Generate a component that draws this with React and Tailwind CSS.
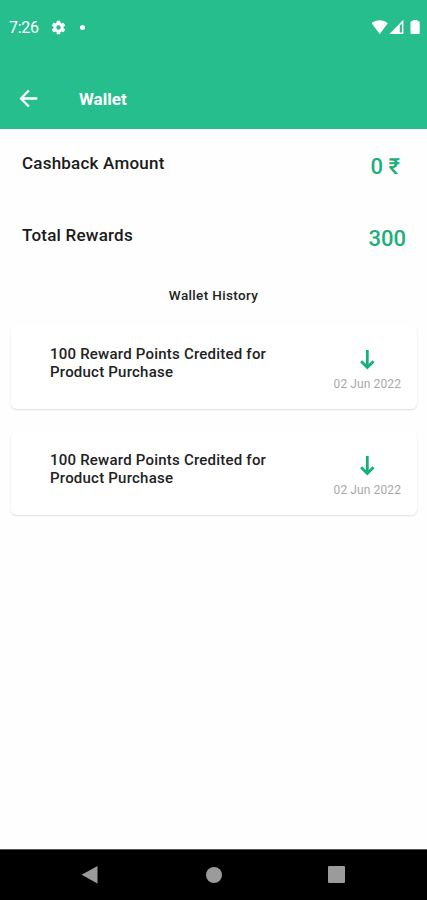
import React from "react";

const history = [
  { id: 1, title: "100 Reward Points Credited for Product Purchase", date: "02 Jun 2022" },
  { id: 2, title: "100 Reward Points Credited for Product Purchase", date: "02 Jun 2022" },
];

function StatusBar() {
  return (
    <div className="flex h-[56px] items-center px-[9px] text-white">
      <span className="w-[41px] text-[16px] leading-[20px] tracking-[-0.3px]">7:26</span>
      <svg className="-mt-[2px] h-[17px] w-[17px]" viewBox="0 0 24 24" fill="currentColor">
        <path d="M19.14 12.94c.04-.3.06-.61.06-.94 0-.32-.02-.64-.07-.94l2.03-1.58a.49.49 0 0 0 .12-.61l-1.92-3.32a.488.488 0 0 0-.59-.22l-2.39.96c-.5-.38-1.03-.7-1.62-.94l-.36-2.54a.484.484 0 0 0-.48-.41h-3.84c-.24 0-.43.17-.47.41l-.36 2.54c-.59.24-1.13.57-1.62.94l-2.39-.96c-.22-.08-.47 0-.59.22L2.74 8.87c-.12.21-.08.47.12.61l2.03 1.58c-.05.3-.09.63-.09.94s.02.64.07.94l-2.03 1.58a.49.49 0 0 0-.12.61l1.92 3.32c.12.22.37.29.59.22l2.39-.96c.5.38 1.03.7 1.62.94l.36 2.54c.05.24.24.41.48.41h3.84c.24 0 .44-.17.47-.41l.36-2.54c.59-.24 1.13-.56 1.62-.94l2.39.96c.22.08.47 0 .59-.22l1.92-3.32c.12-.22.07-.47-.12-.61l-2.01-1.58zM12 15.1A3.1 3.1 0 1 1 12 8.9a3.1 3.1 0 0 1 0 6.2z" />
      </svg>
      <span className="-mt-[1px] ml-[13px] h-[5px] w-[5px] rounded-full bg-white" />
      {/* wifi, signal, battery */}
      <svg className="-mt-[2px] -mr-[4px] ml-auto h-[16px] w-[50px]" viewBox="0 0 50 16" fill="currentColor">
        <path d="M-0.4 4.2C4.1 0.2 11.3 0.2 15.8 4.2L7.7 15Z" />
        <path fillRule="evenodd" d="M31.4 0.8V15H17.4ZM27.8 6.4V13.4H29.9V4.4Z" />
        <path d="M40.7 0.9h4.8v1.3h1.2q1 0 1 1v10.8q0 1-1 1h-7.2q-1 0-1-1v-10.8q0-1 1-1h1.2Z" />
      </svg>
    </div>
  );
}

function AppBar() {
  return (
    <div className="flex h-[73px] items-center pt-[13px] pl-[19px] text-white">
      <svg className="-mt-[2px] h-[19px] w-[19px]" viewBox="0 0 19 19" fill="none" stroke="currentColor" strokeWidth="2.3">
        <path d="M18.3 9.5H2.4M9.8 1.5L2 9.5L9.8 17.5" />
      </svg>
      <h1 className="ml-[41px] text-[17px] leading-[22px] font-bold">Wallet</h1>
    </div>
  );
}

function SummaryRow({ label, value, className }) {
  return (
    <div className={`flex h-[72px] items-start justify-between pl-[22px] ${className}`}>
      <span className="mt-[23px] text-[17px] leading-[22px] font-medium tracking-[0.22px] text-[#1b1b1b]">{label}</span>
      <span className="mt-[24px] text-[22px] leading-[28px] font-medium text-[#1fae7a]">{value}</span>
    </div>
  );
}

function HistoryCard({ title, date }) {
  return (
    <div className="flex h-[84px] justify-between rounded-[6px] bg-white pr-[16px] pl-[39px] shadow-[0_1px_2px_rgba(0,0,0,0.13)]">
      <p className="mt-[20px] w-[235px] text-[15px] leading-[18px] font-medium tracking-[0.22px] text-[#222222]">{title}</p>
      <div className="flex flex-col items-center pt-[25px]">
        <svg className="h-[20px] w-[16px]" viewBox="0 0 16 20" fill="none" stroke="#13b177" strokeWidth="2.8">
          <path d="M8.3 0V17.5M2.1 11.2L8.3 17.4L14.5 11.2" />
        </svg>
        <span className="mt-[6px] text-[12px] leading-[16px] tracking-[0.1px] whitespace-nowrap text-[#a9a9a9]">{date}</span>
      </div>
    </div>
  );
}

function NavBar() {
  return (
    <div className="flex h-[51px] items-center border-t border-[#555555] bg-black pl-[81px] text-[#9b9b9b]">
      <svg className="h-[20px] w-[17px]" viewBox="0 0 17 20" fill="currentColor">
        <path d="M16.5 1V18.6L0.6 9.8Z" />
      </svg>
      <span className="ml-[108px] h-[16px] w-[16px] rounded-full bg-[#9b9b9b]" />
      <span className="-mt-[1px] ml-[106px] h-[17px] w-[17px] rounded-[1px] bg-[#9b9b9b]" />
    </div>
  );
}

export default function App() {
  return (
    <div className="flex h-[900px] w-[427px] flex-col overflow-hidden bg-[#fefefe] font-['Roboto',sans-serif]">
      <header className="h-[129px] bg-[#27be8d]">
        <StatusBar />
        <AppBar />
      </header>
      <main className="flex-1">
        <SummaryRow label="Cashback Amount" value="0 ₹" className="pr-[27px]" />
        <SummaryRow label="Total Rewards" value="300" className="pr-[21px]" />
        <h2 className="mt-[13px] text-center text-[13.5px] leading-[18px] font-medium tracking-[0.35px] text-[#222222]">
          Wallet History
        </h2>
        <div className="mt-[21px] flex flex-col gap-[22px] pr-[10px] pl-[11px]">
          {history.map((item) => (
            <HistoryCard key={item.id} title={item.title} date={item.date} />
          ))}
        </div>
      </main>
      <NavBar />
    </div>
  );
}
